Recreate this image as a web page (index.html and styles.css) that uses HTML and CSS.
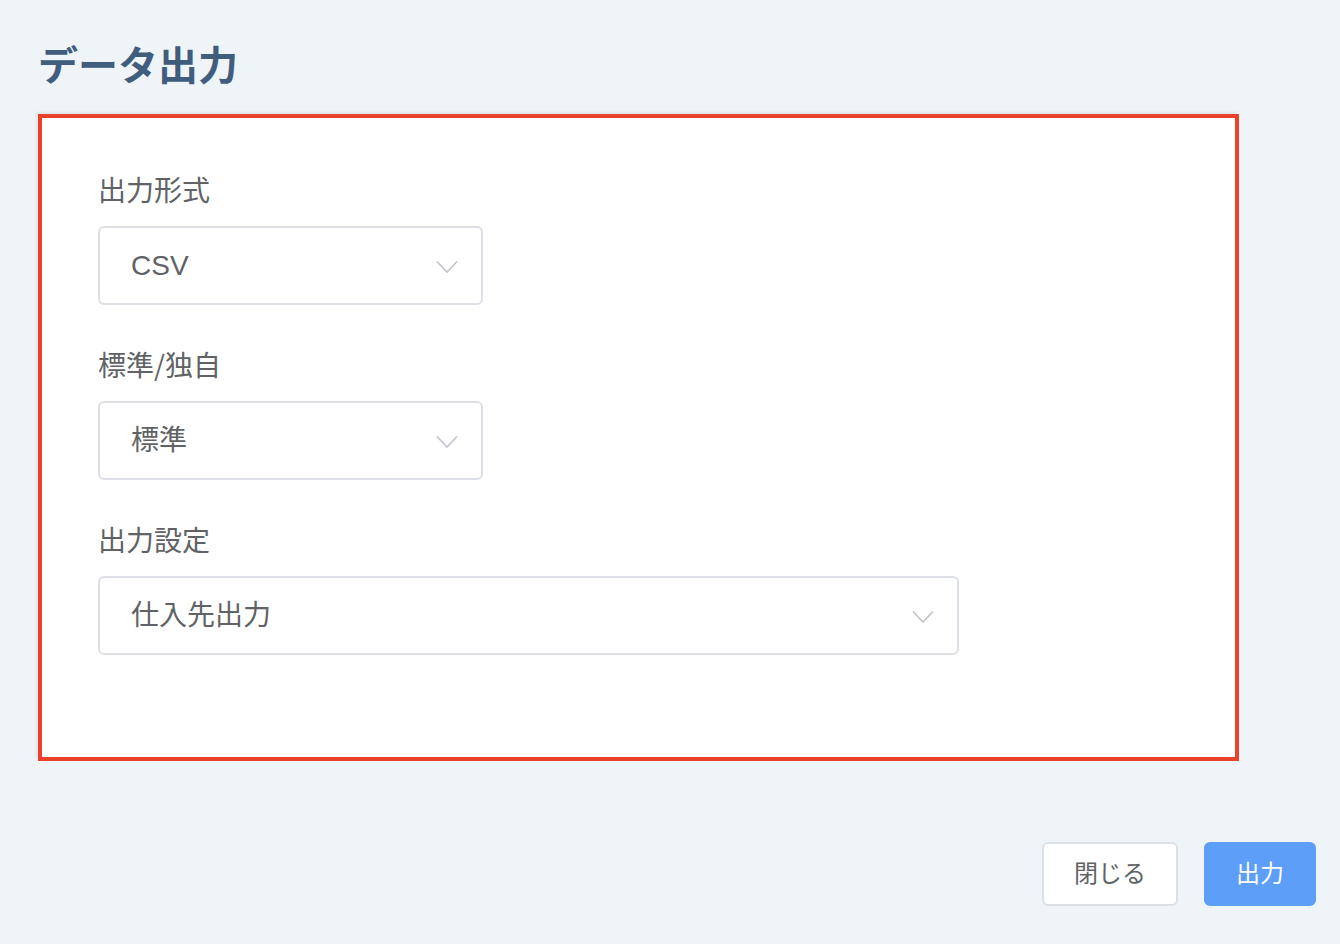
FILE: index.html
```html
<!DOCTYPE html>
<html lang="ja">
<head>
<meta charset="utf-8">
<title>データ出力</title>
<link rel="stylesheet" href="styles.css">
</head>
<body>
<div class="page">
  <h1 class="title">データ出力</h1>
  <div class="card">
    <div class="field">
      <div class="label">出力形式</div>
      <div class="select w-small">
        <span class="value">CSV</span>
        <svg class="chev" width="22" height="14" viewBox="0 0 22 14"><path d="M1 1.5 L11 12 L21 1.5" fill="none" stroke="#c0c4cc" stroke-width="1.6"/></svg>
      </div>
    </div>
    <div class="field">
      <div class="label">標準/独自</div>
      <div class="select w-small">
        <span class="value">標準</span>
        <svg class="chev" width="22" height="14" viewBox="0 0 22 14"><path d="M1 1.5 L11 12 L21 1.5" fill="none" stroke="#c0c4cc" stroke-width="1.6"/></svg>
      </div>
    </div>
    <div class="field">
      <div class="label">出力設定</div>
      <div class="select w-large">
        <span class="value">仕入先出力</span>
        <svg class="chev" width="22" height="14" viewBox="0 0 22 14"><path d="M1 1.5 L11 12 L21 1.5" fill="none" stroke="#c0c4cc" stroke-width="1.6"/></svg>
      </div>
    </div>
  </div>
  <div class="footer">
    <button class="btn btn-default">閉じる</button>
    <button class="btn btn-primary">出力</button>
  </div>
</div>
</body>
</html>
```

FILE: styles.css
```css
* { box-sizing: border-box; }
html, body {
  margin: 0;
  padding: 0;
  background: #eff4f9;
  font-family: "Noto Sans CJK JP", "Noto Sans", sans-serif;
  color: #606266;
}
.page {
  width: 1340px;
  height: 944px;
  padding: 35px 24px 0 38px;
  display: flex;
  flex-direction: column;
}
.title {
  margin: 0;
  font-size: 40px;
  line-height: 56px;
  font-weight: 700;
  color: #415d7e;
}
.card {
  margin-top: 23px;
  width: 1201px;
  height: 647px;
  background: #fff;
  border: 4px solid #e9412a;
  box-shadow: -2px -2px 2px rgba(0,0,0,0.06);
  padding: 51px 0 0 56px;
  display: flex;
  flex-direction: column;
  gap: 39px;
}
.field {
  display: flex;
  flex-direction: column;
  gap: 17px;
}
.label {
  font-size: 28px;
  line-height: 40px;
  color: #606266;
}
.select {
  height: 79px;
  border: 2px solid #dcdfe6;
  border-radius: 6px;
  display: flex;
  align-items: center;
  justify-content: space-between;
  padding: 0 23px 0 31px;
}
.w-small { width: 385px; }
.w-large { width: 861px; }
.value {
  font-family: "Liberation Sans", "Noto Sans CJK JP", sans-serif;
  font-size: 28px;
  color: #606266;
  line-height: 40px;
}
.chev { display: block; margin-top: 3px; }
.footer {
  margin-top: 81px;
  display: flex;
  justify-content: flex-end;
  gap: 26px;
}
.btn {
  height: 64px;
  border-radius: 6px;
  font-family: "Noto Sans CJK JP", sans-serif;
  font-size: 24px;
  padding: 0 0 5px 0;
  cursor: pointer;
}
.btn-default {
  width: 136px;
  background: #fff;
  border: 2px solid #dcdfe6;
  color: #606266;
}
.btn-primary {
  width: 112px;
  background: #5c9ef8;
  border: 2px solid #5c9ef8;
  color: #fff;
}
```
